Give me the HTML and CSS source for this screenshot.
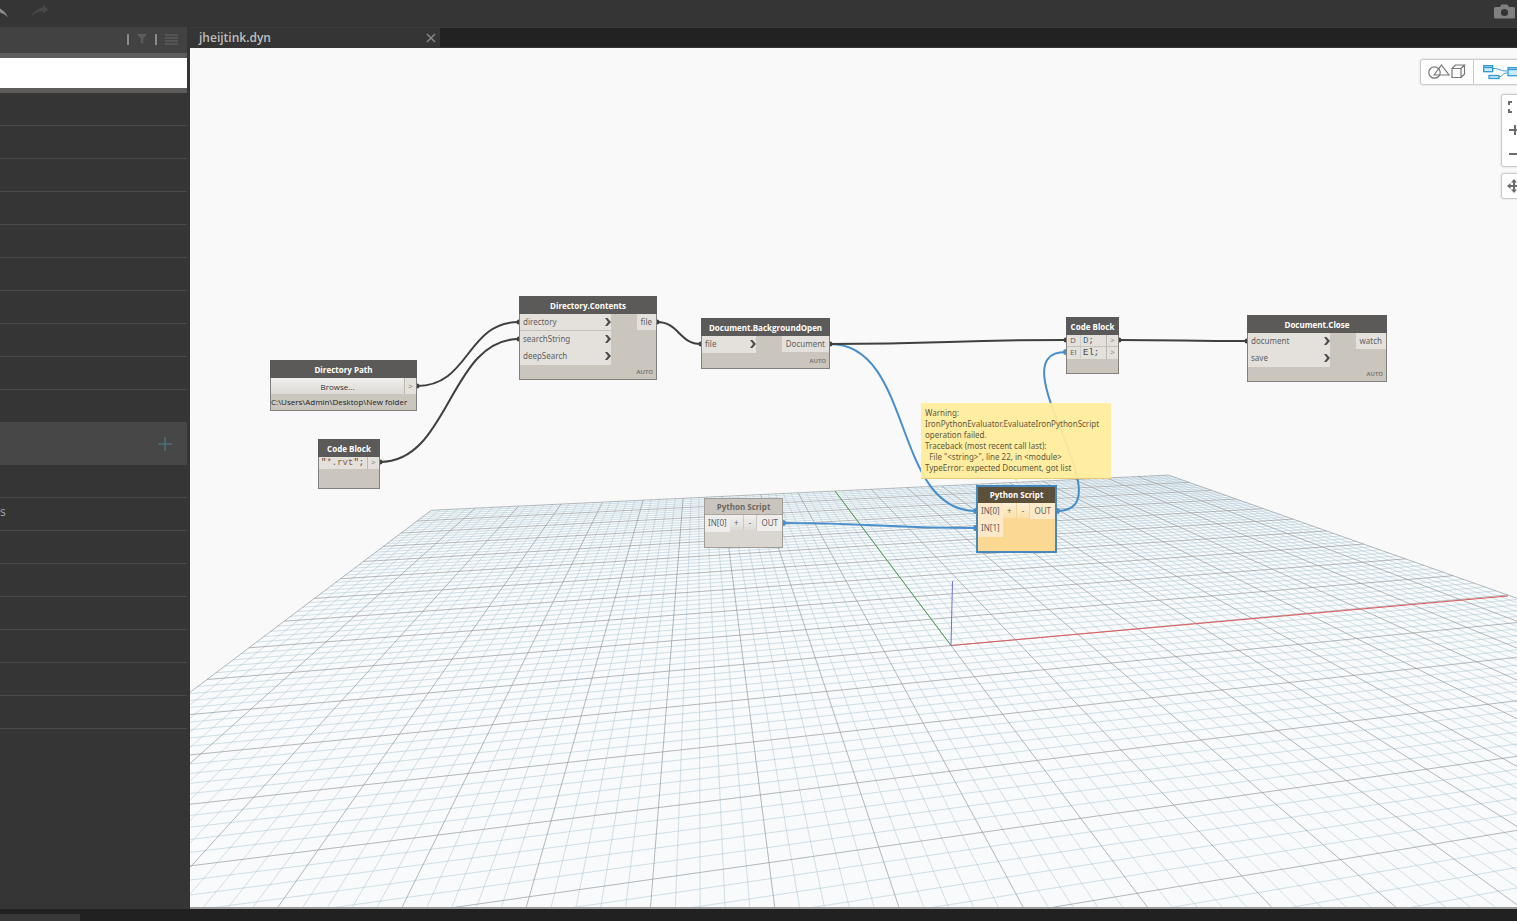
FILE: index.html
```html
<!DOCTYPE html>
<html lang="en">
<head>
<meta charset="utf-8">
<title>jheijtink.dyn</title>
<link rel="stylesheet" href="styles.css">
</head>
<body>
<div class="app">
  <header class="toolbar">
    <div class="history">
      <button class="icon-btn" aria-label="Undo"><svg width="10" height="16" viewBox="0 0 10 16"><path d="M0 4.500C3 6 6.500 9 8 13.500C5 10.500 3 9.500 0 8.500Z" fill="#8c8c8c"/></svg></button>
      <button class="icon-btn" aria-label="Redo"><svg width="18" height="16" viewBox="0 0 18 16"><path d="M0 13.500C2 8 6.500 4 12 3.500V1L17.500 5.500L12 9.500V7C7 7 4 9 0 13.500Z" fill="#484848"/></svg></button>
    </div>
    <button class="icon-btn" aria-label="Export image"><svg width="22" height="16" viewBox="0 0 22 16"><path d="M1.500 3H6L7.500 .5H13.500L15 3H19.500Q21 3 21 4.500V13Q21 14.500 19.500 14.500H1.500Q0 14.500 0 13V4.500Q0 3 1.500 3Z" fill="#808080"/><circle cx="10.500" cy="8.500" r="3.600" fill="#353535"/></svg></button>
  </header>

  <div class="main">
    <aside class="library">
      <div class="library-head">
        <i class="bar"></i>
        <button class="icon-btn" aria-label="Filter"><svg width="10" height="11" viewBox="0 0 10 11"><path d="M0 0H10L6.300 4.500V10L3.800 8.500V4.500Z" fill="#5c5c5c"/></svg></button>
        <i class="bar"></i>
        <button class="icon-btn" aria-label="View mode"><svg width="13" height="11" viewBox="0 0 13 11"><path d="M0 1H13M0 4H13M0 7H13M0 10H13" stroke="#5c5c5c" stroke-width="1.500"/></svg></button>
      </div>
      <div class="search"><input type="search" aria-label="Search library"></div>
      <ul class="items"><li></li><li></li><li></li><li></li><li></li><li></li><li></li><li></li><li></li><li></li></ul>
      <div class="section"><button class="icon-btn" aria-label="Add"><svg width="14" height="14" viewBox="0 0 14 14"><path d="M0 7H14M7 0V14" stroke="#4b707b" stroke-width="1.500"/></svg></button></div>
      <ul class="items"><li></li><li>s</li><li></li><li></li><li></li><li></li><li></li><li></li></ul>
    </aside>

    <section class="editor">
      <nav class="tabs">
        <div class="tab"><span>jheijtink.dyn</span>
          <button class="icon-btn" aria-label="Close tab"><svg width="10" height="10" viewBox="0 0 10 10"><path d="M1 1L9 9M9 1L1 9" stroke="#858585" stroke-width="1.600"/></svg></button>
        </div>
      </nav>

      <div class="workspace">
        <svg class="scene" aria-hidden="true">
          <g transform="translate(-190 -48)" fill="none">
            <path id="floor" class="floor"/>
            <path id="minor" class="minor"/>
            <path id="major" class="major"/>
            <path class="axis-x" d="M951 645.500L1508 596"/>
            <path class="axis-y" d="M951 645.500L835 491"/>
            <path class="axis-z" d="M951 645.500L952.500 581"/>
            <g class="wires">
              <path d="M417 386C470 386 466 322 519 322"/>
              <path d="M380 462C450 462 449 339 519 339"/>
              <path d="M657 322C679 322 679 344 701 344"/>
              <path class="blue" d="M830 344C914 344 892 511 976 511"/>
              <path d="M830 344C948 344 948 340 1066 340"/>
              <path d="M1119 340C1183 340 1183 341 1247 341"/>
              <path class="blue" d="M783 523C879 523 880 528 976 528"/>
              <path class="blue" d="M1057 511C1129 511 994 352 1066 352"/>
            </g>
            <g class="dots">
              <circle cx="417" cy="386" r="2.500"/><circle cx="519" cy="322" r="2.500"/>
              <circle cx="380" cy="462" r="2.500"/><circle cx="519" cy="339" r="2.500"/>
              <circle cx="657" cy="322" r="2.500"/><circle cx="701" cy="344" r="2.500"/>
              <circle cx="830" cy="344" r="2.500"/><circle cx="1066" cy="340" r="2.500"/>
              <circle cx="1119" cy="340" r="2.500"/><circle cx="1247" cy="341" r="2.500"/>
            </g>
            <g class="dots blue">
              <circle cx="783" cy="523" r="3"/><circle cx="976" cy="511" r="3"/><circle cx="976" cy="528" r="3"/>
              <circle cx="1057" cy="511" r="3"/><circle cx="1066" cy="352" r="3"/>
            </g>
          </g>
        </svg>

        <article class="node n-path">
          <h2>Directory Path</h2>
          <div class="line"><button class="browse">Browse...</button><span class="out">&gt;</span></div>
          <p class="path">C:\Users\Admin\Desktop\New folder</p>
        </article>

        <article class="node n-rvt">
          <h2>Code Block</h2>
          <div class="line short"><code class="grow">"<span class="str">*.rvt</span>";</code><span class="out">&gt;</span></div>
        </article>

        <article class="node n-contents">
          <h2>Directory.Contents</h2>
          <div class="ports">
            <ul class="in"><li class="ruled">directory<b class="chev"></b></li><li>searchString<b class="chev"></b></li><li>deepSearch<b class="chev"></b></li></ul>
            <ul class="res"><li>file</li></ul>
          </div>
          <small>AUTO</small>
        </article>

        <article class="node n-open">
          <h2>Document.BackgroundOpen</h2>
          <div class="ports">
            <ul class="in"><li>file<b class="chev"></b></li></ul>
            <ul class="res"><li>Document</li></ul>
          </div>
          <small>AUTO</small>
        </article>

        <article class="node n-code">
          <h2>Code Block</h2>
          <div class="line short ruled"><span class="tag">D</span><code class="grow"><span class="var">D</span>;</code><span class="out">&gt;</span></div>
          <div class="line short"><span class="tag">El</span><code class="grow">El;</code><span class="out">&gt;</span></div>
        </article>

        <article class="node n-close">
          <h2>Document.Close</h2>
          <div class="ports">
            <ul class="in"><li>document<b class="chev"></b></li><li>save<b class="chev"></b></li></ul>
            <ul class="res"><li>watch</li></ul>
          </div>
          <small>AUTO</small>
        </article>

        <article class="node idle n-py1">
          <h2>Python Script</h2>
          <div class="ports">
            <ul class="in"><li>IN[0]</li></ul>
            <button class="step">+</button><button class="step">-</button>
            <ul class="res"><li>OUT</li></ul>
          </div>
        </article>

        <article class="node warn n-py2">
          <h2>Python Script</h2>
          <div class="ports">
            <ul class="in"><li>IN[0]</li><li>IN[1]</li></ul>
            <button class="step">+</button><button class="step">-</button>
            <ul class="res"><li>OUT</li></ul>
          </div>
        </article>

        <div class="bubble" role="alert">Warning:
IronPythonEvaluator.EvaluateIronPythonScript
operation failed.
Traceback (most recent call last):
  File "&lt;string&gt;", line 22, in &lt;module&gt;
TypeError: expected Document, got list</div>

        <div class="views">
          <button aria-label="3D preview"><svg width="38" height="18" viewBox="0 0 38 18" fill="none" stroke="#777" stroke-width="1.200"><circle cx="6.500" cy="9.500" r="5.700"/><path d="M6 12L13.500 2L21 12Z"/><path d="M24 5.500H33V14.500H24ZM24 5.500L27.500 2H36.500L33 5.500M36.500 2V11L33 14.500"/></svg></button>
          <button aria-label="Graph view"><svg width="40" height="18" viewBox="0 0 40 18" fill="#c9e9f8" stroke="#2f9ad0" stroke-width="1.300"><path d="M10 5.500C17 5.500 17 8 24 8M15 14C20 14 19 10 24 10" fill="none" stroke-width="1"/><rect x=".7" y="2.700" width="9" height="6"/><path d="M1 4.500H10"/><rect x="6" y="12.500" width="10" height="3"/><rect x="25" y="4.700" width="12" height="8"/><path d="M25 6.500H37"/></svg></button>
        </div>
        <div class="zoom">
          <button aria-label="Fit view"><svg width="14" height="12" viewBox="0 0 14 12" fill="none" stroke="#6b6b6b" stroke-width="2"><path d="M1 4V1H4M10 1H13V4M13 8V11H10M4 11H1V8"/></svg></button>
          <button aria-label="Zoom in"><svg width="14" height="12" viewBox="0 0 14 12"><path d="M1 6H13M7 1V11" stroke="#6b6b6b" stroke-width="2"/></svg></button>
          <button aria-label="Zoom out"><svg width="14" height="12" viewBox="0 0 14 12"><path d="M1 6H13" stroke="#6b6b6b" stroke-width="2"/></svg></button>
        </div>
        <div class="pan">
          <button aria-label="Pan"><svg width="14" height="14" viewBox="0 0 14 14" fill="#6b6b6b"><path d="M2 6H12V8H2ZM6 2H8V12H6Z"/><path d="M7 0L10 3.500H4ZM7 14L4 10.500H10ZM0 7L3.500 4V10ZM14 7L10.500 10V4Z"/></svg></button>
        </div>
      </div>
    </section>
  </div>

  <footer class="status"><div class="status-tab"></div></footer>
</div>
<script src="grid.js"></script>
</body>
</html>
```
FILE: styles.css
```css
* { box-sizing: border-box; }
body { margin: 0; font-family: "Open Sans", "Noto Sans", sans-serif; font-size: 8px; background: #353535; }
ul { list-style: none; margin: 0; padding: 0; }
button { font: inherit; color: inherit; border: 0; padding: 0; background: none; }
svg { display: block; }

.app { display: flex; flex-direction: column; height: 100vh; overflow: hidden; }
.toolbar { display: flex; align-items: flex-start; justify-content: space-between; height: 27px; padding: 4px 1px 0 0; background: #353535; }
.history { display: flex; gap: 21px; }
.main { flex: 1; display: flex; min-height: 0; }

.library { width: 190px; padding-right: 3px; background: #353535; }
.library-head { display: flex; align-items: center; justify-content: flex-end; gap: 8px; height: 26px; padding: 0 9px 2px 0; background: #424242; }
.library-head .bar { width: 2px; height: 11px; background: #8a8a8a; }
.search { background: #5f5c5c; padding: 5px 0; }
.search input { display: block; width: 100%; height: 30px; border: 0; padding: 0 8px; background: #fff; }
.items li { height: 33px; line-height: 28px; font-size: 12px; color: #a8a8a8; border-bottom: 1px solid #4a4a4a; }
.section { display: flex; align-items: center; justify-content: flex-end; height: 42px; padding-right: 15px; background: #474747; }

.editor { flex: 1; min-width: 0; display: flex; flex-direction: column; }
.tabs { height: 21px; background: #222; border-bottom: 1px solid #353535; border-top: 1px solid #3c3c3c; }
.tab { display: flex; align-items: center; justify-content: space-between; width: 250px; height: 19px; padding: 0 4px 0 9px; background: #353535; color: #bdbdbd; font-size: 12px; font-weight: 600; }

.workspace { position: relative; flex: 1; overflow: hidden; background: #f9f9f9; border-bottom: 2px solid #999; }
.scene { position: absolute; inset: 0; width: 100%; height: 100%; }
.floor { fill: #f9fafb; }
.minor { stroke: #a6c3d2; stroke-opacity: .5; }
.major { stroke: #8a9499; stroke-opacity: .65; }
.axis-x { stroke: #e05a5a; }
.axis-y { stroke: #4da254; }
.axis-z { stroke: #7070d8; }
.wires { stroke: #3f3f3f; stroke-width: 2; }
.wires .blue { stroke: #478ecb; }
.dots { fill: #3f3f3f; }
.dots.blue { fill: #478ecb; }

.node { position: absolute; border: 1px solid #83807c; background: #cac6be; color: #5e5e5e; line-height: 16px; }
.node h2 { margin: -1px -1px 0; height: 18px; line-height: 19px; font-size: 8px; font-weight: 700; text-align: center; color: #fff; background: #5c5a58; white-space: nowrap; }
.line { display: flex; height: 16px; line-height: 15px; background: #e4e1dd; }
.line.short { height: 12px; line-height: 10px; }
.out { width: 12px; text-align: center; border-left: 1px solid #bbb7b1; color: #777; }
.ruled { border-bottom: 1px solid #c4c0ba; }
.grow, .browse { flex: 1; }
.browse { color: #333; background: linear-gradient(#f0efed, #dcd9d5); }
.path { margin: 0; color: #222; white-space: nowrap; }
code { font: 9px/12px "Liberation Mono", monospace; padding-left: 2px; color: #444; white-space: pre; }
.str { color: #8a5a3c; }
.var { color: #3a6f9c; }
.tag { width: 14px; padding-left: 3px; border-right: 1px solid #d0ccc6; }
.ports { display: flex; align-items: flex-start; font-family: "Noto Sans", "Open Sans", sans-serif; }
.in li { display: flex; align-items: flex-start; justify-content: space-between; height: 17px; padding: 0 0 0 3px; background: #e4e1dd; }
.res { margin-left: auto; }
.res li { height: 16px; padding: 0 4px; background: #e4e1dd; }
.chev { width: 6px; height: 8px; margin-top: 4px; background: #4c4c4c; clip-path: polygon(0 0, 40% 0, 100% 50%, 40% 100%, 0 100%, 50% 50%); }
.node small { position: absolute; right: 3px; bottom: 1px; font-size: 6px; line-height: 11px; font-weight: 600; color: #6d6964; }
.step { width: 14px; height: 15px; line-height: 14px; background: linear-gradient(#f2f1ef, #dedbd7); border-right: 1px solid #ccc8c2; }

.n-path { left: 80px; top: 312px; width: 147px; min-height: 51px; }
.n-rvt { left: 128px; top: 391px; width: 62px; min-height: 50px; }
.n-contents { left: 329px; top: 248px; width: 138px; min-height: 84px; }
.n-contents .in { width: 91px; }
.n-open { left: 511px; top: 270px; width: 129px; min-height: 51px; }
.n-open .in { width: 54px; }
.n-code { left: 876px; top: 269px; width: 53px; min-height: 57px; }
.n-close { left: 1057px; top: 267px; width: 140px; min-height: 67px; }
.n-close .in { width: 82px; }
.n-py1 { left: 514px; top: 450px; width: 79px; min-height: 50px; }
.n-py2 { left: 786px; top: 437px; width: 81px; min-height: 68px; }
.n-py1 .in, .n-py2 .in { width: 25px; }

.idle { background: #d9d6d2; border-color: #a09d99; }
.idle h2 { margin: 0; height: 16px; line-height: 16px; color: #6a6865; background: #c9c4bc; border-bottom: 1px solid #aaa69f; }
.idle .in li, .idle .res li { background: #eeedeb; }
.warn { border: 2px solid #4787b9; background: #fbd993; }
.warn h2 { margin: 0; height: 16px; line-height: 15px; background: #5c503b; }
.warn .in li, .warn .res li { background: #fbe9c8; }
.warn .step { background: linear-gradient(#fdf0d8, #fbe0ac); border-color: #f3d59b; }

.bubble { position: absolute; left: 731px; top: 355px; width: 190px; padding: 4px 4px 5px; font-family: "Noto Sans", "Open Sans", sans-serif; line-height: 11px; white-space: pre; color: #5f5a3c; background: rgba(255, 236, 156, .94); border-bottom: 1px solid #ecca74; }
.bubble::after { content: ""; position: absolute; left: 92px; top: 100%; border: 3px solid transparent; border-top-color: #f6dc88; }

.views, .zoom, .pan { position: absolute; display: flex; background: #fff; border: 1px solid #ccc; border-radius: 3px; box-shadow: 0 0 2px #ccc; }
.views { top: 11px; right: -7px; height: 26px; }
.views button { display: flex; align-items: center; padding: 0 7px; }
.views button + button { border-left: 1px solid #ccc; padding: 0 0 0 9px; }
.zoom { top: 46px; right: -10px; width: 26px; height: 73px; flex-direction: column; justify-content: space-around; }
.pan { top: 125px; right: -10px; width: 26px; height: 26px; align-items: center; }
.zoom button { padding-left: 6px; }
.pan button { padding-left: 5px; }

.status { display: flex; align-items: flex-end; height: 12px; background: #212121; }
.status-tab { width: 80px; height: 7px; background: #383838; }
```
FILE: grid.js
```javascript
// Ground plane: 20 x 20 major cells, five minor cells each, in perspective.
const A = 0.0176, B = 0.08479, NEAR = 0.12, N = 10;
const depth = (u, v) => A * u + B * v + 1;
const project = (u, v) => {
  const w = depth(u, v);
  return ((82.2 * u + 59.2 * v + 951) / w).toFixed(1) + " " + ((5.42 * u + 26.18 * v + 645.5) / w).toFixed(1);
};
let minor = "", major = "";
for (let i = -N * 5; i <= N * 5; i++) {
  const k = i / 5;
  const vMin = Math.max(-N, (NEAR - 1 - A * k) / B);
  const uMin = Math.max(-N, (NEAR - 1 - B * k) / A);
  let d = "M" + project(k, vMin) + "L" + project(k, N);
  if (uMin < N) d += "M" + project(uMin, k) + "L" + project(N, k);
  if (i % 5) minor += d; else major += d;
}
document.getElementById("minor").setAttribute("d", minor);
document.getElementById("major").setAttribute("d", major);
document.getElementById("floor").setAttribute("d",
  "M" + project(-N, -8) + "L" + project(-N, N) + "L" + project(N, N) + "L" + project(N, -N) + "Z");
```
